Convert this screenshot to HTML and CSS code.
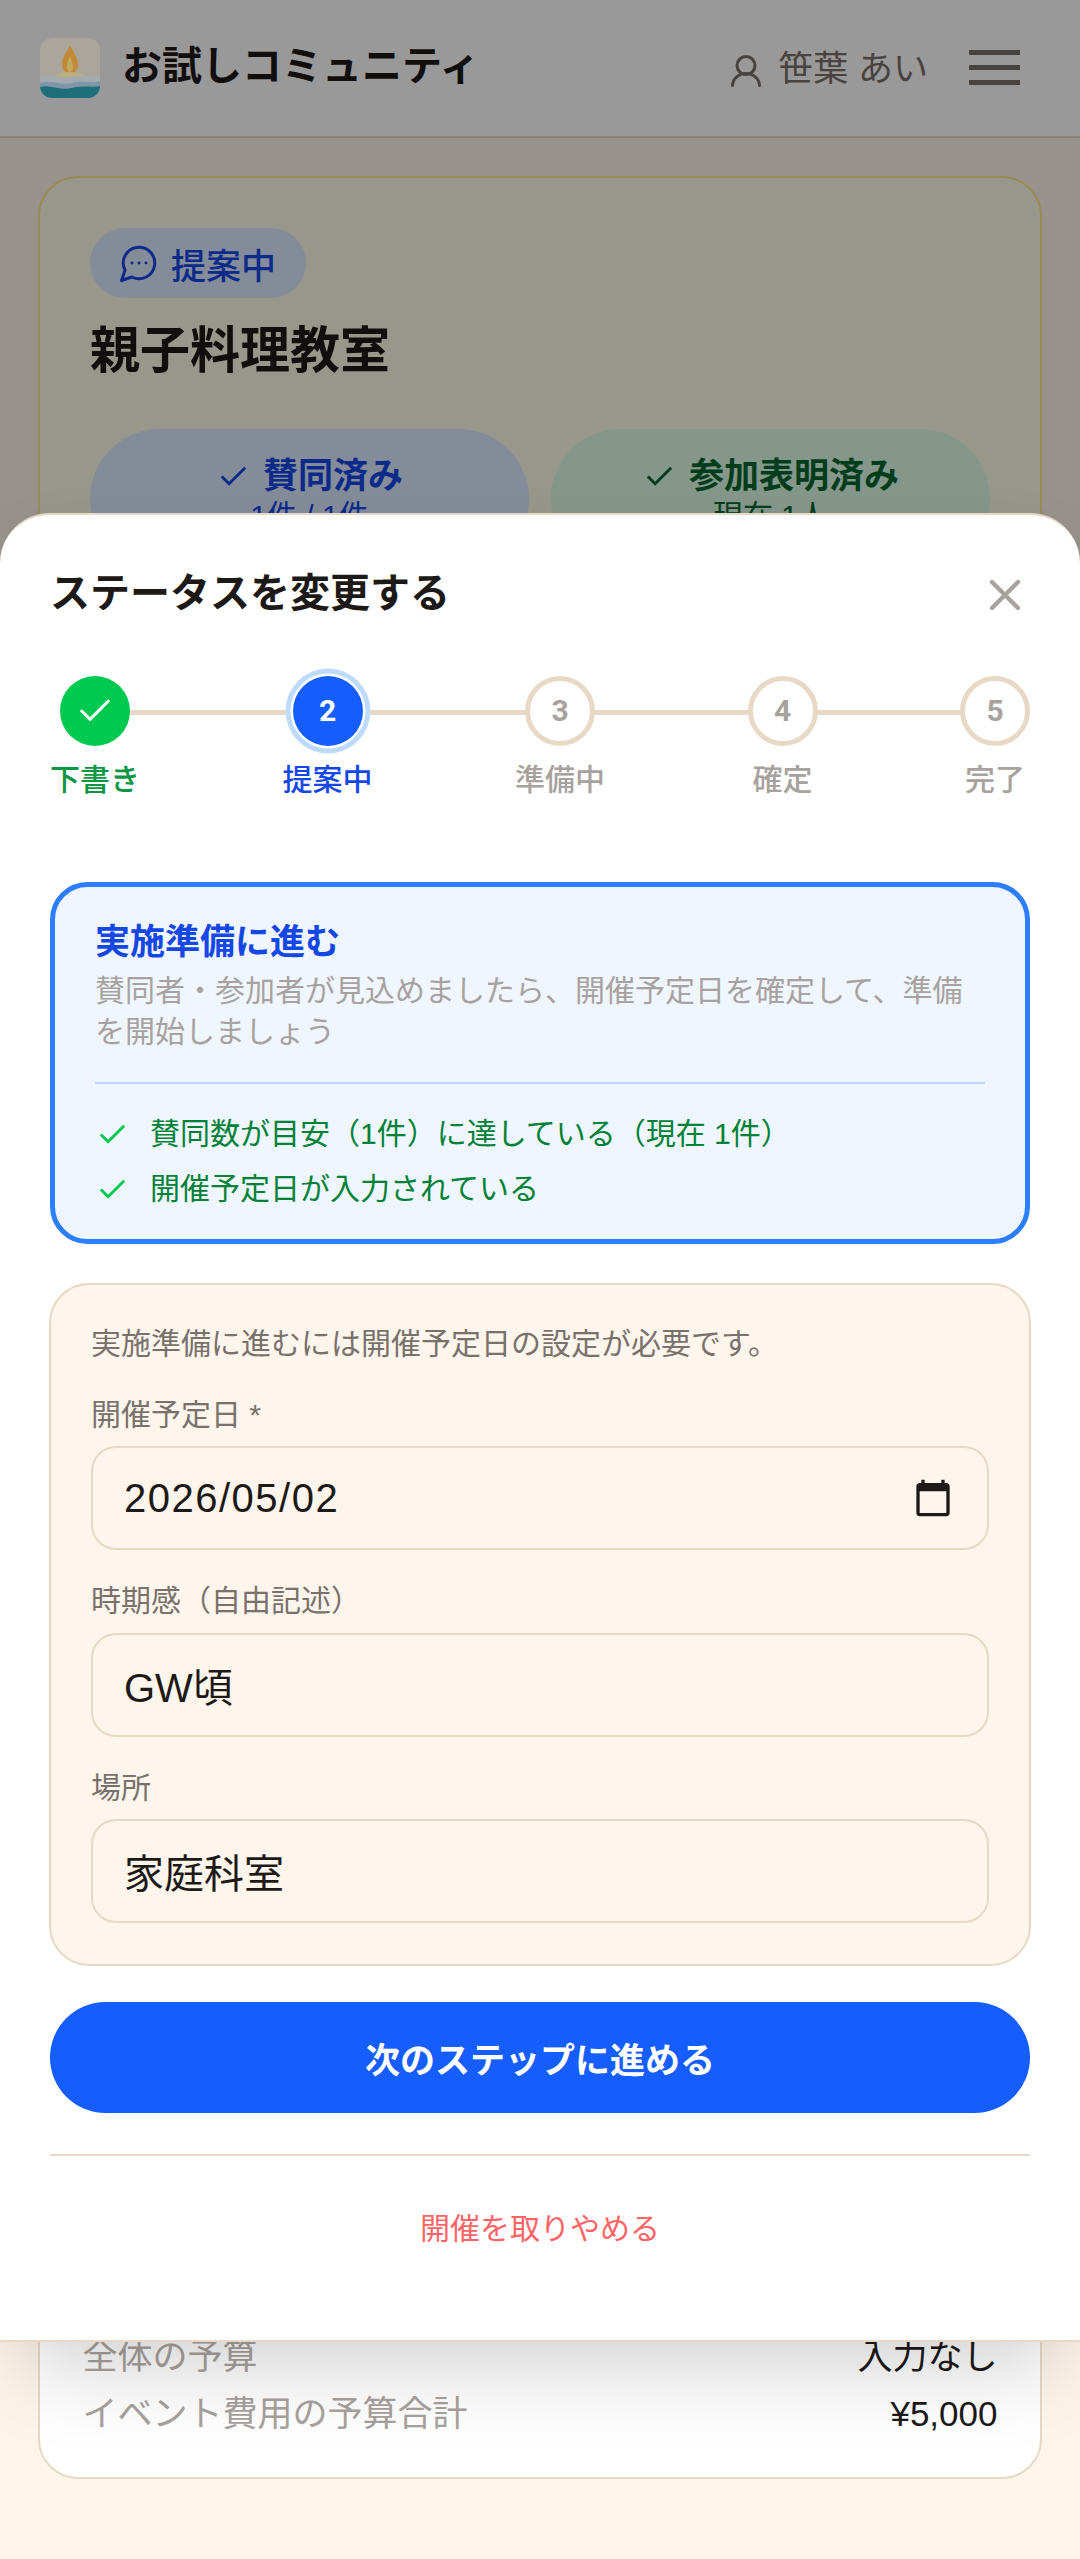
FILE: index.html
```html
<!DOCTYPE html>
<html lang="ja">
<head>
    <meta charset="UTF-8">
    <title>お試しコミュニティ</title>
    <link rel="stylesheet" href="styles.css">
</head>
<body>
<div class="page">
    <header class="top_bar">
        <div class="brand">
            <svg class="brand_logo" viewBox="0 0 60 60">
                <defs><clipPath id="logo_clip"><rect width="60" height="60" rx="12"/></clipPath></defs>
                <g clip-path="url(#logo_clip)">
                    <rect width="60" height="60" fill="#aaa69c"/>
                    <path d="M30 7C33 14 38 19 38 26C38 32 34 36 30 36C26 36 22 32 22 26C22 19 27 14 30 7Z" fill="#c28a36"/>
                    <path d="M30 18C32 23 33 26 33 29C33 32 31 34 30 34C29 34 27 32 27 29C27 26 28 23 30 18Z" fill="#bfa860"/>
                    <ellipse cx="30" cy="37" rx="14" ry="3" fill="#b8ae80"/>
                    <path d="M0 39C10 35 18 42 30 39C42 36 50 41 60 37V60H0Z" fill="#a3abae"/>
                    <path d="M0 45C10 41 20 48 32 45C44 42 52 46 60 43V60H0Z" fill="#7f97a8"/>
                    <path d="M0 49C10 46 20 53 32 50C44 47 52 50 60 48V60H0Z" fill="#1f6f7b"/>
                </g>
            </svg>
            <span class="brand_name">お試しコミュニティ</span>
        </div>
        <div class="top_right">
            <svg class="user_icon" viewBox="0 0 30 33"><circle cx="15" cy="11.5" r="9"/><path d="M1.5 31.5a13.5 12 0 0 1 27 0"/></svg>
            <span class="user_name">笹葉 あい</span>
            <div class="menu_btn"><span></span><span></span><span></span></div>
        </div>
    </header>
    <main class="contents">
        <section class="card card_event">
            <div class="badge">
                <svg class="badge_icon" viewBox="0 0 24 24"><path d="M7.9 20A9 9 0 1 0 4 16.1L2 22Z"/><path d="M8 12h.01M12 12h.01M16 12h.01"/></svg>
                提案中
            </div>
            <h1 class="event_title">親子料理教室</h1>
            <div class="event_actions">
                <div class="action action_blue">
                    <div class="action_head">
                        <svg class="action_check" viewBox="0 0 24 24"><path d="M20 6 9 17 4 12"/></svg>
                        賛同済み
                    </div>
                    <div class="action_sub">1件 / 1件</div>
                </div>
                <div class="action action_green">
                    <div class="action_head">
                        <svg class="action_check" viewBox="0 0 24 24"><path d="M20 6 9 17 4 12"/></svg>
                        参加表明済み
                    </div>
                    <div class="action_sub">現在 1人</div>
                </div>
            </div>
        </section>
        <section class="card card_budget">
            <div class="budget_row"><span class="budget_key">全体の予算</span><span>入力なし</span></div>
            <div class="budget_row"><span class="budget_key">イベント費用の予算合計</span><span>¥5,000</span></div>
        </section>
    </main>

    <div class="overlay"></div>

    <div class="sheet">
        <div class="sheet_head">
            <h2 class="sheet_title">ステータスを変更する</h2>
            <svg class="sheet_close" viewBox="0 0 24 24"><path d="M18 6 6 18M6 6l12 12"/></svg>
        </div>

        <div class="stepper">
            <div class="step step_done">
                <div class="step_circle"><svg class="step_check" viewBox="0 0 24 24"><path d="M20 6 9 17 4 12"/></svg></div>
                <div class="step_label">下書き</div>
            </div>
            <div class="step step_now">
                <div class="step_circle">2</div>
                <div class="step_label">提案中</div>
            </div>
            <div class="step">
                <div class="step_circle">3</div>
                <div class="step_label">準備中</div>
            </div>
            <div class="step">
                <div class="step_circle">4</div>
                <div class="step_label">確定</div>
            </div>
            <div class="step">
                <div class="step_circle">5</div>
                <div class="step_label">完了</div>
            </div>
        </div>

        <div class="next_box">
            <div class="next_title">実施準備に進む</div>
            <div class="next_desc">賛同者・参加者が見込めましたら、開催予定日を確定して、準備を開始しましょう</div>
            <div class="next_checks">
                <div class="next_check">
                    <svg class="check_icon" viewBox="0 0 24 24"><path d="M20 6 9 17 4 12"/></svg>
                    賛同数が目安（1件）に達している（現在 1件）
                </div>
                <div class="next_check">
                    <svg class="check_icon" viewBox="0 0 24 24"><path d="M20 6 9 17 4 12"/></svg>
                    開催予定日が入力されている
                </div>
            </div>
        </div>

        <div class="form_panel">
            <div class="form_note">実施準備に進むには開催予定日の設定が必要です。</div>
            <div class="field">
                <div class="field_label">開催予定日 *</div>
                <div class="field_box">
                    <span class="field_date">2026/05/02</span>
                    <svg class="calendar_icon" viewBox="0 0 24 24"><path d="M20 3h-1V1h-2v2H7V1H5v2H4c-1.1 0-2 .9-2 2v16c0 1.1.9 2 2 2h16c1.1 0 2-.9 2-2V5c0-1.1-.9-2-2-2zm0 18H4V8h16v13z"/></svg>
                </div>
            </div>
            <div class="field">
                <div class="field_label">時期感（自由記述）</div>
                <div class="field_box">GW頃</div>
            </div>
            <div class="field">
                <div class="field_label">場所</div>
                <div class="field_box">家庭科室</div>
            </div>
        </div>

        <div class="btn_next">次のステップに進める</div>
        <div class="cancel_area">開催を取りやめる</div>
    </div>
</div>
</body>
</html>
```

FILE: styles.css
```css
* {
    box-sizing: border-box;
}
body {
    margin: 0;
    background-color: #fdf4ea;
    color: #1c1917;
    font-family: "Liberation Sans", "Noto Sans CJK JP", sans-serif;
}
svg {
    display: block;
    flex-shrink: 0;
}
.page {
    position: relative;
    display: flex;
    flex-direction: column;
    height: 2559px;
    overflow: hidden;
}

.top_bar {
    display: flex;
    align-items: center;
    justify-content: space-between;
    height: 137.5px;
    padding: 0 60px 0 40px;
    background-color: #fff;
    border-bottom: 2.5px solid #e7d9c5;
}
.brand {
    display: flex;
    align-items: center;
    gap: 22px;
}
/* the logo keeps its own toned colours, so it sits above the dimmer */
.brand_logo {
    position: relative;
    z-index: 2;
    width: 60px;
    height: 60px;
}
.brand_name {
    margin-bottom: 10px;
    font-size: 40px;
    font-weight: bold;
}
.top_right {
    display: flex;
    align-items: center;
}
.user_icon {
    width: 30px;
    height: 33px;
    margin-top: 5px;
    fill: none;
    stroke: #78716c;
    stroke-width: 3;
    stroke-linecap: round;
}
.user_name {
    margin-bottom: 4px;
    margin-left: 17px;
    font-size: 35px;
    color: #78716c;
}
.menu_btn {
    display: flex;
    flex-direction: column;
    gap: 10px;
    width: 51px;
    margin-left: 41px;
}
.menu_btn>span {
    height: 5px;
    background-color: #78716c;
}

.contents {
    flex: 1;
    display: flex;
    flex-direction: column;
    justify-content: space-between;
    padding: 38px 38px 80px;
}
.card {
    border: 2.5px solid #e7d9c5;
    border-radius: 40px;
    background-color: #fff;
}
.card_event {
    height: 600px;
    padding: 50.5px 50px;
    background-color: #fefce8;
    border-color: #fde68a;
}
.badge {
    display: flex;
    align-items: center;
    gap: 11px;
    width: 216px;
    height: 70px;
    padding-left: 28px;
    border-radius: 35px;
    background-color: #dbeafe;
    color: #1447e6;
    font-size: 35px;
    font-weight: 500;
}
.badge_icon {
    width: 42px;
    height: 42px;
    fill: none;
    stroke: #1447e6;
    stroke-width: 1.7;
    stroke-linecap: round;
    stroke-linejoin: round;
}
.event_title {
    margin: 18px 0 0;
    font-size: 50px;
    line-height: 70px;
}
.event_actions {
    display: flex;
    gap: 22px;
    margin-top: 43px;
}
.action {
    flex: 1;
    height: 140px;
    padding-top: 22px;
    border-radius: 70px;
    text-align: center;
}
.action_blue {
    background-color: #dbeafe;
    color: #1447e6;
}
.action_green {
    background-color: #dcfce7;
    color: #016630;
}
.action_head {
    display: flex;
    align-items: center;
    justify-content: center;
    gap: 12px;
    font-size: 35px;
    font-weight: bold;
    line-height: 50px;
}
.action_check {
    width: 35px;
    height: 35px;
    fill: none;
    stroke: currentColor;
    stroke-width: 2;
}
.action_sub {
    margin-top: -5px;
    font-size: 30px;
    line-height: 40px;
}
.card_budget {
    padding: 30px 42.5px 38px;
    font-size: 35px;
}
.budget_row {
    display: flex;
    justify-content: space-between;
    line-height: 50px;
    margin-top: 7.5px;
}
.budget_key {
    color: #a8a29e;
}

.overlay {
    position: absolute;
    z-index: 1;
    top: 0;
    left: 0;
    width: 100%;
    height: 2342px;
    background-color: rgba(0, 0, 0, 0.4);
}
.sheet {
    position: absolute;
    z-index: 3;
    top: 513px;
    left: 0;
    width: 100%;
    height: 1829px;
    padding: 47.5px 50px 0;
    background-color: #fff;
    border-top: 2.5px solid #e7d9c5;
    border-bottom: 2.5px solid #e7d9c5;
    border-radius: 50px 50px 0 0;
    box-shadow: 0 40px 90px -20px rgba(0, 0, 0, 0.2);
}
.sheet_head {
    display: flex;
    align-items: center;
    justify-content: space-between;
    height: 60px;
}
.sheet_title {
    margin: 0;
    font-size: 40px;
    line-height: 60px;
}
.sheet_close {
    width: 52px;
    height: 52px;
    margin-top: 4px;
    margin-right: -1px;
    fill: none;
    stroke: #a8a29e;
    stroke-width: 2;
    stroke-linecap: round;
}

.stepper {
    position: relative;
    display: flex;
    justify-content: space-between;
    margin-top: 53px;
}
.stepper::before {
    content: "";
    position: absolute;
    top: 34px;
    left: 50px;
    right: 30px;
    height: 5px;
    background-color: #e7d9c5;
}
.step {
    position: relative;
    display: flex;
    flex-direction: column;
    align-items: center;
    min-width: 70px;
}
.step_circle {
    display: flex;
    align-items: center;
    justify-content: center;
    width: 70px;
    height: 70px;
    border: 5px solid #e7d9c5;
    border-radius: 50%;
    background-color: #fff;
    color: #a8a29e;
    font-family: Roboto, "Liberation Sans", sans-serif;
    font-size: 30px;
    font-weight: bold;
}
.step_label {
    margin-top: 14px;
    font-size: 30px;
    line-height: 40px;
    color: #a8a29e;
    font-weight: 500;
}
.step_done .step_circle {
    border: 0;
    background-color: #00c950;
}
.step_check {
    width: 40px;
    height: 40px;
    fill: none;
    stroke: #fff;
    stroke-width: 1.8;
    stroke-linecap: round;
    stroke-linejoin: round;
}
.step_done .step_label {
    color: #0a9643;
}
.step_now .step_circle {
    border: 0;
    background-color: #155dfc;
    color: #fff;
    box-shadow: 0 0 0 2.5px #fff, 0 0 0 7.5px #bedbff;
}
.step_now .step_label {
    color: #1447e6;
}

.next_box {
    margin-top: 82px;
    padding: 30px 40px;
    border: 5px solid #2b7fff;
    border-radius: 37.5px;
    background-color: #eff6ff;
}
.next_title {
    font-size: 35px;
    font-weight: bold;
    line-height: 50px;
    color: #1447e6;
}
.next_desc {
    margin-top: 3.5px;
    font-size: 30px;
    line-height: 41px;
    color: #a8a29e;
}
.next_checks {
    display: flex;
    flex-direction: column;
    gap: 15px;
    margin-top: 30px;
    padding-top: 30px;
    border-top: 2.5px solid #bedbff;
}
.next_check {
    display: flex;
    align-items: center;
    gap: 20px;
    font-size: 30px;
    line-height: 40px;
    color: #008236;
}
.check_icon {
    width: 35px;
    height: 35px;
    fill: none;
    stroke: #00c950;
    stroke-width: 2;
}

.form_panel {
    display: flex;
    flex-direction: column;
    gap: 31px;
    margin: 39px -1px 0;
    padding: 38.5px 40px 41px;
    border: 2.5px solid #e7d9c5;
    border-radius: 40px;
    background-color: #fef5ec;
}
.form_note {
    font-size: 30px;
    line-height: 40px;
    color: #78716c;
}
.field_label {
    margin-bottom: 11.5px;
    font-size: 30px;
    line-height: 40px;
    color: #78716c;
}
.field_box {
    display: flex;
    align-items: center;
    justify-content: space-between;
    height: 104px;
    padding: 0 34.5px 0 31px;
    border: 2.5px solid #e7d9c5;
    border-radius: 25px;
    font-size: 40px;
}
.field_date {
    letter-spacing: 1.5px;
}
.calendar_icon {
    width: 40px;
    height: 40px;
    fill: #1c1917;
}

.btn_next {
    display: flex;
    align-items: center;
    justify-content: center;
    height: 111px;
    margin-top: 36px;
    border-radius: 56px;
    background-color: #155dfc;
    color: #fff;
    font-size: 35px;
    font-weight: bold;
}
.cancel_area {
    margin-top: 41px;
    padding-top: 53px;
    border-top: 2.5px solid #e7d9c5;
    font-size: 30px;
    line-height: 40px;
    text-align: center;
    color: #ff6467;
}
```
